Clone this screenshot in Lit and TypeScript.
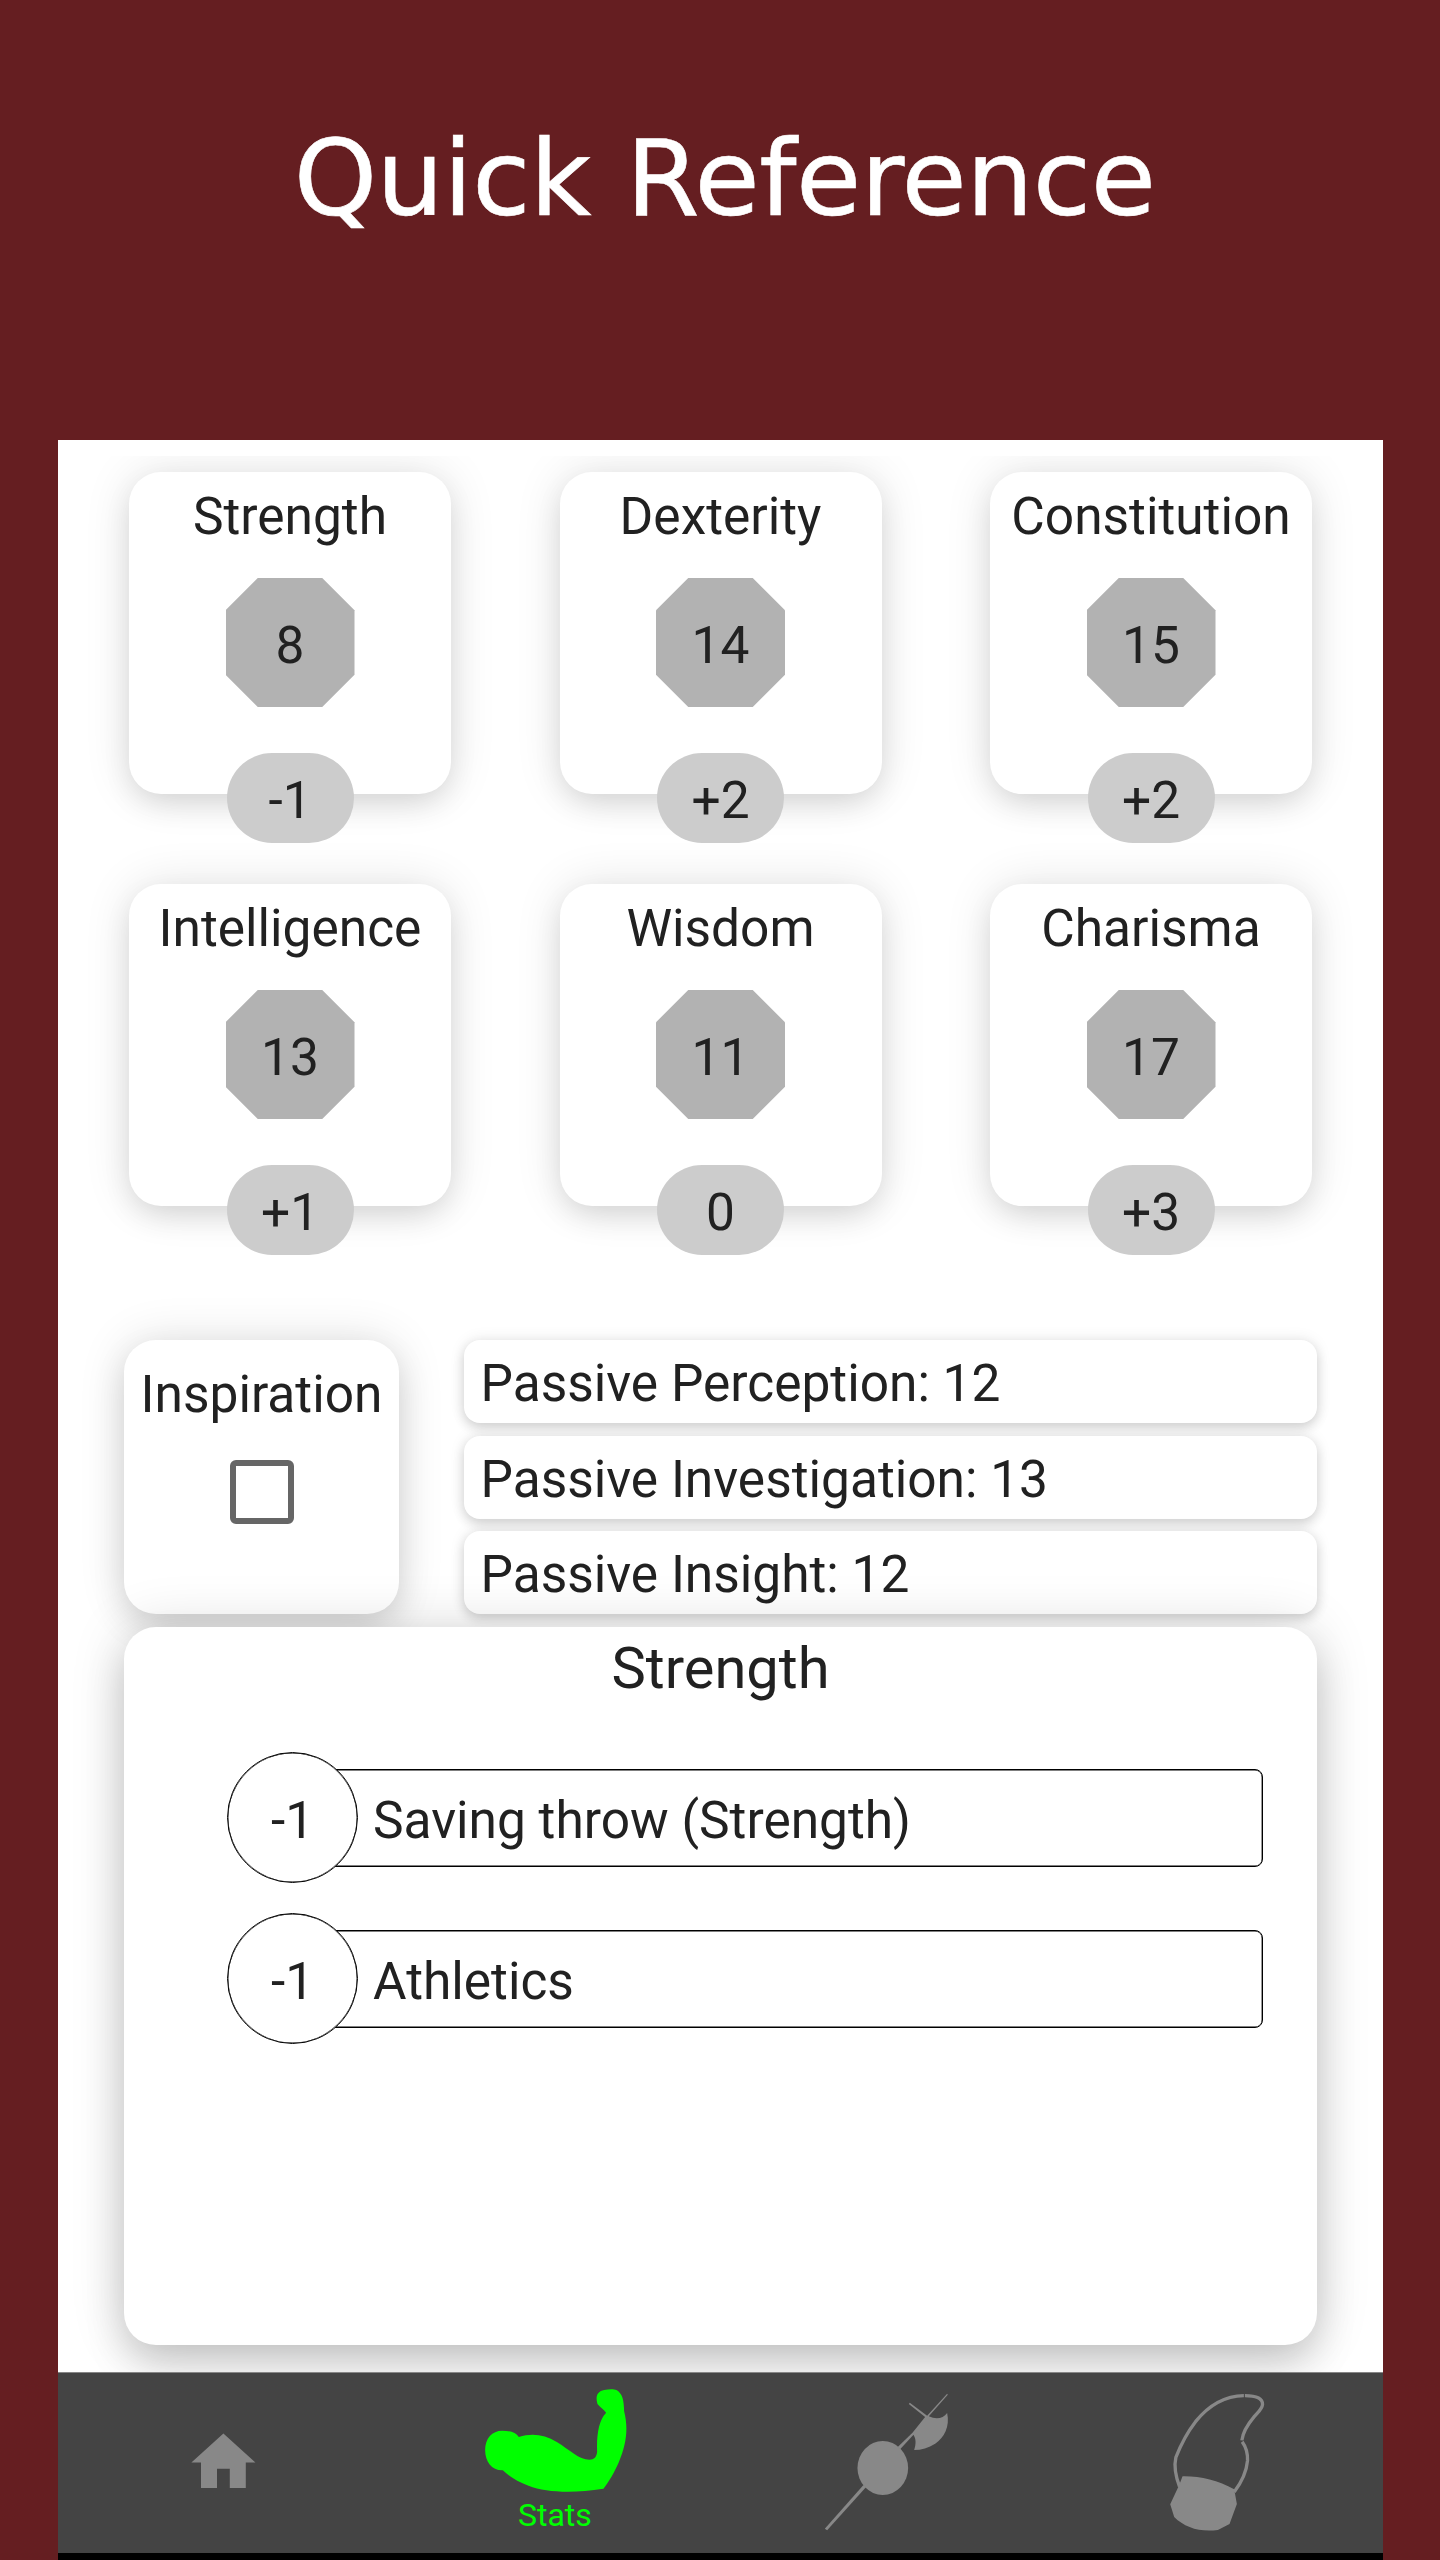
import { LitElement, html, css, svg } from "lit";
import { customElement } from "lit/decorators.js";

const ABILITIES = [
  { name: "Strength", score: "8", mod: "-1" },
  { name: "Dexterity", score: "14", mod: "+2" },
  { name: "Constitution", score: "15", mod: "+2" },
  { name: "Intelligence", score: "13", mod: "+1" },
  { name: "Wisdom", score: "11", mod: "0" },
  { name: "Charisma", score: "17", mod: "+3" },
];

const PASSIVES = ["Passive Perception: 12", "Passive Investigation: 13", "Passive Insight: 12"];

const SKILLS = [
  { mod: "-1", name: "Saving throw (Strength)" },
  { mod: "-1", name: "Athletics" },
];

const homeIcon = svg`<path d="M10 20v-6h4v6h5v-8h3L12 3 2 12h3v8z"/>`;

const armIcon = svg`<path d="M75 270C75 235 96 212 126 212C150 212 168 217 176 231C215 219 252 223 290 246C330 270 355 299 388 299C402 299 410 290 411 275C409 225 416 180 438 158C430 148 420 142 412 132C405 108 412 94 432 90C447 87 461 87 469 90C488 101 491 122 492 154C505 205 499 252 476 307C464 335 446 366 430 386C340 400 260 398 205 377C172 365 148 350 128 331C95 332 75 305 75 270Z"/>`;

const axeIcon = svg`
  <ellipse cx="248" cy="294" rx="76" ry="81"/>
  <path d="M74 476L190 345L198 351L81 481Z"/>
  <path d="M292 232L337 188L375 141L326 102L329 98L381 137L441 71L443 74L386 139C408 149 429 146 441 129C450 170 432 203 405 221C385 234 364 240 342 240C348 221 348 207 340 194L300 238Z"/>`;

const pouchIcon = svg`
  <path d="M158 319C210 318 264 331 313 358L321 402L299 462L264 480C210 487 165 473 133 441L121 403L148 345Z"/>
  <g class="strap">
    <path d="M149 350C136 315 132 288 138 262C152 226 170 190 197 155C235 108 285 78 342 77"/>
    <path d="M345 77C380 77 398 86 398 103C397 117 385 126 373 140C353 164 339 185 336 211"/>
    <path d="M337 215C350 233 354 250 353 272C350 305 335 337 313 366"/>
  </g>`;

@customElement("app-root")
export class AppRoot extends LitElement {
  static styles = css`
    :host {
      display: flex;
      flex-direction: column;
      box-sizing: border-box;
      width: 1440px;
      height: 2560px;
      padding: 0 57px 0 58px;
      overflow: hidden;
      background: #651e21;
      font-family: Roboto, "Liberation Sans", sans-serif;
      font-size: 51.45px;
      color: #212121;
    }
    * {
      box-sizing: border-box;
    }
    .headline {
      height: 440px;
      flex: none;
      margin: 0;
      padding: 117px 0 0 8px;
      text-align: center;
      color: #fff;
      font-family: "DejaVu Sans", sans-serif;
      font-weight: 400;
      font-size: 106px;
      line-height: 124px;
      letter-spacing: -0.5px;
      word-spacing: 2px;
      -webkit-text-stroke: 0.6px #fff;
      white-space: nowrap;
    }
    .screen {
      height: 1932px;
      flex: none;
      padding-top: 16px;
      background: #fff;
      overflow: hidden;
    }
    .abilities {
      display: grid;
      grid-template-columns: repeat(3, 322px);
      grid-auto-rows: 322px;
      row-gap: 90px;
      justify-content: space-between;
      height: 824px;
      padding: 16px 71px 0;
      overflow: hidden;
    }
    .ability {
      display: flex;
      flex-direction: column;
      align-items: center;
      border-radius: 32px;
      background: #fff;
      box-shadow: 0 0 48px rgba(0, 0, 0, 0.11), 0 12px 30px -4px rgba(0, 0, 0, 0.12);
    }
    .name {
      flex: none;
      height: 106px;
      line-height: 90px;
      white-space: nowrap;
    }
    .score {
      display: flex;
      align-items: center;
      justify-content: center;
      flex: none;
      width: 129px;
      height: 129px;
      padding-top: 5px;
      background: #b2b2b2;
      clip-path: polygon(25% 0, 75% 0, 100% 25%, 100% 75%, 75% 100%, 25% 100%, 0 75%, 0 25%);
    }
    .mod {
      display: flex;
      align-items: center;
      justify-content: center;
      flex: none;
      width: 127px;
      height: 90px;
      margin-top: 46px;
      padding-top: 4px;
      border-radius: 45px;
      background: #ccc;
    }
    .summary {
      display: flex;
      justify-content: space-between;
      height: 274px;
      margin: 60px 66px 0;
    }
    .inspiration {
      display: flex;
      flex-direction: column;
      align-items: center;
      width: 275px;
      border-radius: 32px;
      background: #fff;
      box-shadow: 0 0 48px rgba(0, 0, 0, 0.12), 0 14px 34px -2px rgba(0, 0, 0, 0.13);
    }
    .inspiration .name {
      height: 119.5px;
      line-height: 109px;
    }
    .checkbox {
      width: 64px;
      height: 64px;
      border: 6px solid #666;
      border-radius: 6px;
    }
    .passives {
      display: flex;
      flex-direction: column;
      justify-content: space-between;
      width: 853px;
    }
    .passive {
      height: 83px;
      padding-left: 16.5px;
      border-radius: 16px;
      line-height: 88px;
      background: #fff;
      box-shadow: 0 0 16px rgba(0, 0, 0, 0.09), 0 5px 12px rgba(0, 0, 0, 0.14);
    }
    .detail {
      position: relative;
      height: 718px;
      margin: 13px 66px 0;
      padding: 0 54px 0 103px;
      border-radius: 32px;
      background: #fff;
      box-shadow: 0 0 56px rgba(0, 0, 0, 0.14), 0 20px 40px -2px rgba(0, 0, 0, 0.18);
    }
    .detail-title {
      height: 125px;
      margin: 0 0 0 -49px;
      text-align: center;
      font-size: 57.8px;
      font-weight: 400;
      line-height: 83px;
    }
    .skill {
      display: flex;
      align-items: center;
      height: 131px;
      margin-bottom: 30px;
    }
    .skill-mod {
      display: flex;
      align-items: center;
      justify-content: center;
      flex: none;
      width: 131px;
      height: 131px;
      padding-top: 6px;
      border: 1px solid #000;
      border-radius: 50%;
      background: #fff;
      box-shadow: inset 0 0 0 0.4px #000;
      z-index: 1;
    }
    .skill-name {
      flex: 1;
      height: 98px;
      margin-left: -65px;
      padding-left: 79px;
      border: 1px solid #000;
      border-radius: 8px;
      box-shadow: inset 0 0 0 0.4px #000;
      line-height: 101px;
    }
    .nav {
      display: grid;
      grid-template-columns: repeat(4, 1fr);
      height: 181px;
      flex: none;
      border-top: 1px solid #868686;
      background: #444;
      fill: #888;
    }
    .tab {
      display: flex;
      flex-direction: column;
      align-items: center;
    }
    .glyph {
      display: block;
      width: 160px;
      height: 180px;
    }
    .home {
      width: 76.8px;
      height: 76.8px;
      margin-top: 51px;
    }
    .arm {
      height: 124px;
      fill: #00ff00;
    }
    .tab-label {
      margin-top: -1px;
      color: #00ff00;
      font-size: 32px;
      line-height: 38px;
    }
    .strap {
      fill: none;
      stroke: #888;
      stroke-width: 10;
    }
    .system-bar {
      flex: 1;
      background: #000;
    }
  `;

  render() {
    return html`
      <h1 class="headline">Quick Reference</h1>
      <main class="screen">
        <section class="abilities">
          ${ABILITIES.map(
            (a) => html`<article class="ability">
              <div class="name">${a.name}</div>
              <div class="score">${a.score}</div>
              <div class="mod">${a.mod}</div>
            </article>`
          )}
        </section>
        <section class="summary">
          <div class="inspiration">
            <div class="name">Inspiration</div>
            <div class="checkbox"></div>
          </div>
          <div class="passives">${PASSIVES.map((p) => html`<div class="passive">${p}</div>`)}</div>
        </section>
        <section class="detail">
          <h2 class="detail-title">Strength</h2>
          ${SKILLS.map(
            (s) => html`<div class="skill">
              <div class="skill-mod">${s.mod}</div>
              <div class="skill-name">${s.name}</div>
            </div>`
          )}
        </section>
      </main>
      <nav class="nav">
        <div class="tab"><svg class="glyph home" viewBox="0 0 24 24">${homeIcon}</svg></div>
        <div class="tab">
          <svg class="glyph arm" viewBox="44.6 39 480 372">${armIcon}</svg>
          <span class="tab-label">Stats</span>
        </div>
        <div class="tab"><svg class="glyph" viewBox="17.6 9 480 540">${axeIcon}</svg></div>
        <div class="tab"><svg class="glyph" viewBox="21.4 9 480 540">${pouchIcon}</svg></div>
      </nav>
      <div class="system-bar"></div>
    `;
  }
}
